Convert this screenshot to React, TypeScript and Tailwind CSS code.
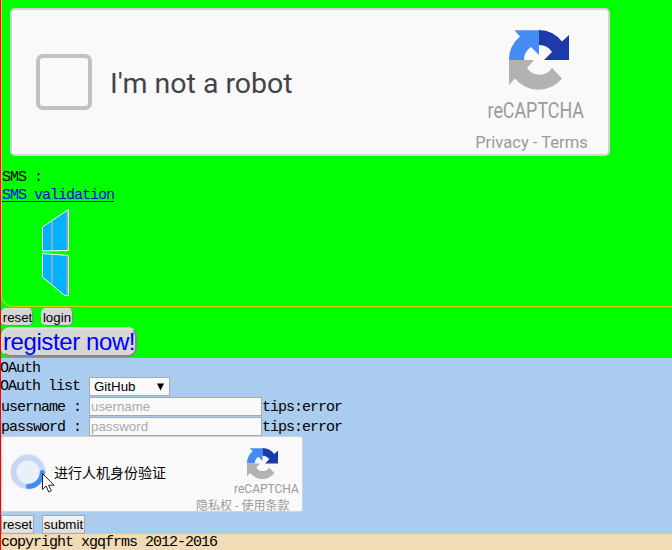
import React from "react";

const mono = "font-['Liberation_Mono','Noto_Sans_CJK_SC',monospace] text-[15px] leading-[18px] tracking-[-1px] whitespace-pre";
const ui = "font-['Liberation_Sans',sans-serif]";

function CaptchaLogo({ className }: { className: string }) {
  return (
    <svg viewBox="0 0 60 60" className={className}>
      <path fill="#448bf4" d="M0 30A30 30 0 0 1 11 6.5L5.5.3H30V25L22 17A15 15 0 0 0 15 30Z" />
      <path fill="#1c3aa9" d="M30 0A30 30 0 0 1 53 11.5L60 5V30H35L43 22A15 15 0 0 0 30 15Z" />
      <path fill="#b2b2b2" d="M0 30H25L18 38A15 15 0 0 0 43 38L53 48.5A30 30 0 0 1 6 48.5L0 55Z" />
    </svg>
  );
}

function RobotCheck() {
  return (
    <div className="ml-2 flex h-[148px] w-[600px] rounded-[5px] border-2 border-[#d3d3d3] bg-[#f9f9f9] font-[Roboto,sans-serif]">
      <div className="ml-6 mt-11 size-14 shrink-0 rounded-[7px] border-4 border-[#c1c1c1]" />
      <div className="ml-[18px] mt-14 h-9 w-[200px] whitespace-nowrap text-[28.5px] leading-9 text-[#45434a]">I'm not a robot</div>
      <div className="ml-auto flex w-[152px] flex-col items-center pt-5 text-[#9b9b9b]">
        <CaptchaLogo className="ml-3.5 size-[60px] shrink-0" />
        <div className="ml-2 mt-2 origin-center scale-x-[0.85] scale-y-[1.03] text-[21px] leading-[26px]">reCAPTCHA</div>
        <div className="mt-1 mr-px whitespace-nowrap text-[16.6px] leading-[30px]">Privacy - Terms</div>
      </div>
    </div>
  );
}

function WindowLogo() {
  return (
    <svg viewBox="0 0 28 88" className="ml-10 mt-1 h-[88px] w-7">
      <g fill="#00b2ff" stroke="#fff">
        <path d="M.5 18L26.5.5V41.5L.5 42Z" />
        <path d="M.5 44.5L26.5 46.5V87L22 86L.5 68Z" />
      </g>
      <path d="M10 12V41M10 46V75M25.2 2.5V41M25.2 47V85" stroke="#8fabc2" strokeWidth="1.8" />
    </svg>
  );
}

function Verify() {
  return (
    <div className="relative flex h-[76px] w-[302px] rounded-[3px] border border-[#d3d3d3] bg-[#f9f9f9] tracking-normal">
      <svg viewBox="0 0 36 36" className="ml-2 mt-[17px] size-9 shrink-0" fill="none">
        <circle cx="18" cy="18" r="14.5" fill="#e9f1f8" stroke="#c7d7f4" strokeWidth="6" />
        <path d="M32.3 18.5A14.5 14.5 0 0 1 18.5 32.5" stroke="#448bf4" strokeWidth="5" strokeLinecap="round" />
      </svg>
      <svg viewBox="0 0 13 20" className="absolute left-10 top-[36px] h-5 w-[13px]">
        <path d="M.5.5V16.5L4 13L6.8 19L9.3 17.8L6.6 12.2H12Z" fill="#fff" stroke="#222" />
      </svg>
      <div className="ml-2 mt-[25px] whitespace-nowrap font-['Noto_Sans_CJK_SC',sans-serif] text-[14px] leading-5 text-black">进行人机身份验证</div>
      <div className="ml-auto flex w-28 flex-col pt-[11px] text-[#9b9b9b]">
        <CaptchaLogo className="ml-[57px] size-[31px] shrink-0" />
        <div className="ml-[44px] mt-[3px] whitespace-nowrap font-[Roboto,sans-serif] text-[12px] leading-[14px]">reCAPTCHA</div>
        <div className="ml-[6px] mt-px whitespace-nowrap font-['Noto_Sans_CJK_SC',sans-serif] text-[12px] leading-4">隐私权 - 使用条款</div>
      </div>
    </div>
  );
}

function Field({ name }: { name: string }) {
  return (
    <div className="flex h-5 items-start">
      <label className="w-22 pt-0.5">{name} : </label>
      <input placeholder={name} className={`${ui} h-[19px] w-[173px] border border-[#a9a9a9] bg-[#f9f9f9] px-px text-[13.33px] tracking-normal placeholder:text-[#a9a9a9]`} />
      <span className="pt-0.5">tips:error</span>
    </div>
  );
}

export default function App() {
  return (
    <div className="h-[550px] w-[672px] overflow-hidden border-l border-[#f00] bg-[#0f0]">
      <div className="h-[307px] rounded-bl-[12px] border-b border-l border-[#d5d500] pt-2">
        <RobotCheck />
        <div className={`${mono} mt-[13px] text-black`}>SMS :</div>
        <div className={mono}><a href="#" className="text-[#00e] underline underline-offset-2">SMS validation</a></div>
        <WindowLogo />
      </div>
      <div className={`${ui} flex h-5 gap-2 pt-px text-[13.33px] leading-4`}>
        <button className="flex h-[18px] w-8 items-center justify-center rounded-[5px] border border-t-[#ddd] border-l-[#ddd] border-r-[#888] border-b-[#888] bg-[#d6d6d6] pt-0.5 pl-px">reset</button>
        <button className="flex h-[18px] w-8 items-center justify-center rounded-[5px] border border-t-[#ddd] border-l-[#ddd] border-r-[#888] border-b-[#888] bg-[#d6d6d6] pt-0.5">login</button>
      </div>
      <div className="h-[31px]">
        <button className={`${ui} h-[30px] w-[136px] whitespace-nowrap rounded-[9px] border-2 border-t-[#ddd] border-l-[#ddd] border-r-[#888] border-b-[#888] bg-[#d6d6d6] text-[24px] leading-[26px] tracking-[-0.4px] text-[#00f]`}><span className="-mx-1">register now!</span></button>
      </div>
      <div className={`${mono} h-[176px] bg-[#aaccee] text-black`}>
        <div className="-ml-px h-[19px] pt-0.5">OAuth</div>
        <div className="flex h-5 items-start">
          <span className="-ml-px w-[89px] pt-px">OAuth list</span>
          <button className={`${ui} flex h-[19px] w-[81px] items-center justify-between border border-[#a9a9a9] bg-[#f9f9f9] pl-1 pr-[5px] text-[13.33px] tracking-normal`}>
            GitHub
            <svg viewBox="0 0 8 8" className="h-2 w-[7px]"><path d="M0 0H8L4 8Z" /></svg>
          </button>
        </div>
        <Field name="username" />
        <div className="h-[19px]"><Field name="password" /></div>
        <Verify />
        <div className={`${ui} flex gap-2 pt-[3px] text-[13.33px] tracking-normal`}>
          <button className="flex h-[19px] w-[33px] items-center justify-center border border-[#a8a8a8] bg-linear-to-b from-[#f5f5f5] to-[#ddd]">reset</button>
          <button className="flex h-[19px] w-[43px] items-center justify-center border border-[#a8a8a8] bg-linear-to-b from-[#f5f5f5] to-[#ddd]">submit</button>
        </div>
      </div>
      <div className="h-4 bg-[#f2dbb5] font-['Liberation_Mono',monospace] text-[15px] leading-[18px] tracking-[-1px] whitespace-pre text-black">copyright xgqfrms 2012-2016</div>
    </div>
  );
}
